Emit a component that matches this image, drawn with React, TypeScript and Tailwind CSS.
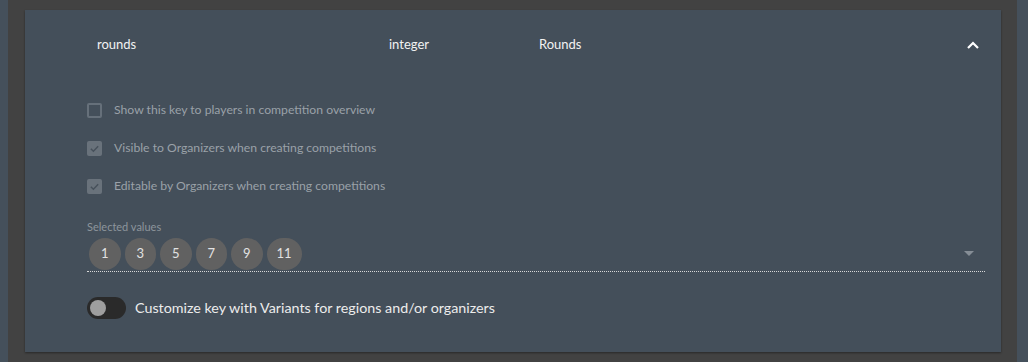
import React from "react";

function Checkbox({ checked, label }: { checked: boolean; label: string }) {
  return (
    <div className="h-[38px] flex items-center">
      {checked ? (
        <div className="w-[15px] h-[15px] rounded-[2px] bg-[#69727b] flex items-center justify-center">
          <svg width="11" height="11" viewBox="0 0 12 12">
            <path d="M2 6.2 L4.8 9 L10 3.5" fill="none" stroke="#47515b" strokeWidth="1.6" />
          </svg>
        </div>
      ) : (
        <div className="w-[15px] h-[15px] rounded-[2px] border-2 border-[#66707a]" />
      )}
      <span className="ml-[12px] text-[12.2px] text-[#9aa1a8]">{label}</span>
    </div>
  );
}

export default function App() {
  const values = ["1", "3", "5", "7", "9", "11"];
  return (
    <div className="w-full h-[362px] bg-[#45505b] pl-[8px] pr-[11px] font-['Lato',sans-serif]">
      <div className="h-full bg-[#424242] pl-[17px] pr-[16px] pt-[10px]">
        <div className="bg-[#444f5a] h-[342px] shadow-[0_1px_2px_rgba(0,0,0,0.4)]">
          <div className="h-[70px] flex items-center pl-[72px] pr-[21px] text-[13px] text-[#f2f2f2]">
            <div className="w-[292px]">rounds</div>
            <div className="w-[150px]">integer</div>
            <div className="flex-1">Rounds</div>
            <svg width="14" height="10" viewBox="0 0 14 10">
              <path d="M2 8 L7 3 L12 8" fill="none" stroke="#ffffff" strokeWidth="2.2" />
            </svg>
          </div>

          <div className="pl-[62px] pr-[16px] mt-[11px]">
            <Checkbox checked={false} label="Show this key to players in competition overview" />
            <Checkbox checked={true} label="Visible to Organizers when creating competitions" />
            <Checkbox checked={true} label="Editable by Organizers when creating competitions" />

            <div className="mt-[15px] text-[11px] leading-[14px] text-[#8d959c]">Selected values</div>
            <div className="mt-[3px] h-[35px] flex items-center border-b border-dotted border-[#d8d8d8]">
              <div className="flex gap-[4px] ml-[2px]">
                {values.map((v) => (
                  <div
                    key={v}
                    className="min-w-[31.5px] h-[31.5px] px-[10px] rounded-full bg-[#616161] text-[#e2e2e2] text-[13px] flex items-center justify-center"
                  >
                    {v}
                  </div>
                ))}
              </div>
              <svg className="ml-auto mr-[11px]" width="10" height="6" viewBox="0 0 10 6">
                <path d="M0 0 L10 0 L5 5 Z" fill="#868e96" />
              </svg>
            </div>

            <div className="mt-[25px] flex items-center h-[22px]">
              <div className="w-[39px] h-[22px] rounded-full bg-[#2a2a2a] flex items-center pl-[3px]">
                <div className="w-[16px] h-[16px] rounded-full bg-[#9e9e9e]" />
              </div>
              <span className="ml-[9px] text-[14.3px] text-[#ececec]">
                Customize key with Variants for regions and/or organizers
              </span>
            </div>
          </div>
        </div>
      </div>
    </div>
  );
}
